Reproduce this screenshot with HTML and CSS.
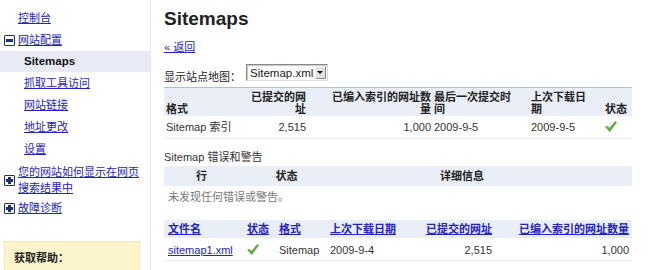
FILE: index.html
```html
<!DOCTYPE html>
<html lang="zh-CN">
<head>
    <meta charset="UTF-8">
    <title>Sitemaps</title>
    <link rel="stylesheet" href="styles.css">
</head>
<body>
    <div class="page">
        <!-- 左侧导航 -->
        <div class="sidebar">
            <ul class="nav">
                <li class="top"><a href="#">控制台</a></li>
                <li class="group"><span class="toggle minus"></span><a href="#">网站配置</a></li>
                <li class="sub active">Sitemaps</li>
                <li class="sub"><a href="#">抓取工具访问</a></li>
                <li class="sub"><a href="#">网站链接</a></li>
                <li class="sub"><a href="#">地址更改</a></li>
                <li class="sub"><a href="#">设置</a></li>
                <li class="group tall"><span class="toggle plus"></span><a href="#">您的网站如何显示在网页搜索结果中</a></li>
                <li class="group tall"><span class="toggle plus"></span><a href="#">故障诊断</a></li>
            </ul>
            <div class="help">获取帮助：</div>
        </div>

        <!-- 主内容 -->
        <div class="main">
            <h1>Sitemaps</h1>
            <div class="back"><a href="#">« 返回</a></div>

            <div class="picker">
                <span class="picker-label">显示站点地图：</span>
                <span class="select"><span class="select-text">Sitemap.xml</span><span class="select-btn"></span></span>
            </div>

            <table class="grid summary">
                <colgroup>
                    <col style="width:82px"><col style="width:64px"><col style="width:124px">
                    <col style="width:95px"><col style="width:74px"><col>
                </colgroup>
                <thead>
                    <tr>
                        <th class="c1">格式</th>
                        <th class="c2">已提交的网址</th>
                        <th class="c3">已编入索引的网址数量</th>
                        <th class="c4">最后一次提交时间</th>
                        <th class="c5">上次下载日期</th>
                        <th class="c6">状态</th>
                    </tr>
                </thead>
                <tbody>
                    <tr>
                        <td class="c1">Sitemap 索引</td>
                        <td class="c2">2,515</td>
                        <td class="c3">1,000</td>
                        <td class="c4">2009-9-5</td>
                        <td class="c5">2009-9-5</td>
                        <td class="c6"><span class="check"></span></td>
                    </tr>
                </tbody>
            </table>

            <div class="caption">Sitemap 错误和警告</div>

            <table class="grid errors">
                <colgroup>
                    <col style="width:75px"><col style="width:95px"><col>
                </colgroup>
                <thead>
                    <tr><th>行</th><th>状态</th><th class="detail">详细信息</th></tr>
                </thead>
                <tbody>
                    <tr><td colspan="3" class="empty">未发现任何错误或警告。</td></tr>
                </tbody>
            </table>

            <table class="grid files">
                <colgroup>
                    <col style="width:79px"><col style="width:32px"><col style="width:51px">
                    <col style="width:79px"><col style="width:91px"><col>
                </colgroup>
                <thead>
                    <tr>
                        <th><a href="#">文件名</a></th>
                        <th><a href="#">状态</a></th>
                        <th><a href="#">格式</a></th>
                        <th><a href="#">上次下载日期</a></th>
                        <th class="num"><a href="#">已提交的网址</a></th>
                        <th class="num last"><a href="#">已编入索引的网址数量</a></th>
                    </tr>
                </thead>
                <tbody>
                    <tr>
                        <td><a href="#">sitemap1.xml</a></td>
                        <td><span class="check"></span></td>
                        <td>Sitemap</td>
                        <td>2009-9-4</td>
                        <td class="num">2,515</td>
                        <td class="num last">1,000</td>
                    </tr>
                </tbody>
            </table>
        </div>
    </div>
</body>
</html>
```

FILE: styles.css
```css
body {
    margin: 0;
    font-family: "Liberation Sans", "Noto Sans CJK SC", sans-serif;
    font-size: 11px;
    color: #222;
    background: #fff;
}

a {
    color: #2323c8;
}

.page {
    display: flex;
    height: 270px;
    overflow: hidden;
}

/* 侧边栏 */
.sidebar {
    width: 150px;
    flex-shrink: 0;
    border-right: 1px solid #e6eaf3;
}

.nav {
    list-style: none;
    margin: 0;
    padding: 7px 0 0;
}

.nav li {
    height: 22px;
    line-height: 22px;
}

.nav .top {
    padding-left: 18px;
}

.nav .group {
    display: flex;
    align-items: center;
    padding-left: 4px;
    padding-right: 10px;
}

.nav .group.tall {
    height: auto;
    line-height: 16px;
    padding-top: 4px;
    padding-bottom: 0;
}

.nav .sub {
    padding-left: 24px;
}

.nav .active {
    background: #e8ebf5;
    font-weight: bold;
    color: #111;
    height: 21px;
    line-height: 21px;
    font-size: 11.5px;
}

.toggle {
    width: 9px;
    height: 9px;
    border: 1px solid #1d2f7a;
    border-radius: 1px;
    margin-right: 3px;
    flex-shrink: 0;
    position: relative;
    background: #fff;
}

.toggle::before {
    content: '';
    position: absolute;
    left: 1px;
    right: 1px;
    top: 3px;
    height: 3px;
    background: #1d2f7a;
}

.toggle.plus::after {
    content: '';
    position: absolute;
    top: 1px;
    bottom: 1px;
    left: 3px;
    width: 3px;
    background: #1d2f7a;
}

.help {
    margin: 25px 10px 0 4px;
    height: 40px;
    background: #fcf5cc;
    border: 1px solid #f2e7ad;
    border-bottom: none;
    padding: 9px 0 0 9px;
    font-weight: bold;
    line-height: 14px;
    box-sizing: border-box;
}

/* 主内容 */
.main {
    flex: 1;
    padding-left: 13px;
    padding-right: 17px;
}

h1 {
    font-size: 19px;
    line-height: 22px;
    margin: 8px 0 0;
}

.back {
    margin-top: 10px;
    line-height: 14px;
}

.picker {
    display: flex;
    align-items: center;
    margin-top: 9px;
    height: 19px;
}

.picker-label {
    width: 82px;
    position: relative;
    top: 3px;
}

.select {
    display: flex;
    align-items: center;
    width: 82px;
    height: 17px;
    box-sizing: border-box;
    border: 1px solid #8a8a8a;
    border-right-color: #ddd;
    border-bottom-color: #ddd;
    box-shadow: inset 1px 1px 0 #c8c8c8;
    font-size: 11.5px;
    padding-left: 3px;
}

.select-text {
    flex: 1;
}

.select-btn {
    width: 11px;
    height: 13px;
    margin-right: 1px;
    background: #e4e1d8;
    border: 1px solid #fff;
    border-right-color: #8a8a8a;
    border-bottom-color: #8a8a8a;
    box-sizing: border-box;
    position: relative;
}

.select-btn::after {
    content: '';
    position: absolute;
    left: 1px;
    top: 4px;
    border-left: 3px solid transparent;
    border-right: 3px solid transparent;
    border-top: 3px solid #111;
}

/* 表格 */
.grid {
    width: 468px;
    border-collapse: collapse;
    table-layout: fixed;
}

.grid th {
    background: #eaeef7;
    font-weight: bold;
    text-align: left;
    vertical-align: bottom;
}

.grid td {
    color: #333;
}

.summary {
    margin-top: 5px;
    border-top: 1px solid #a9c0e6;
}

.summary th {
    line-height: 12px;
    padding: 3px 0 1px;
}

.summary td {
    line-height: 14px;
    padding: 4px 0;
    border-bottom: 1px solid #eceff5;
}

.summary .c1 { padding-left: 2px; }
.summary .c2 { text-align: right; padding-right: 4px; }
.summary .c3 { text-align: right; padding-left: 18px; padding-right: 3px; }
.summary .c4 { padding-left: 0; padding-right: 12px; }
.summary .c5 { padding-left: 2px; padding-right: 12px; }
.summary .c6 { padding-left: 2px; }

.caption {
    margin-top: 11px;
    line-height: 14px;
    color: #333;
}

.errors {
    margin-top: 2px;
}

.errors th {
    text-align: center;
    line-height: 14px;
    padding: 3px 0;
}

.errors th.detail {
    padding-right: 42px;
}

.errors td.empty {
    padding: 4px 4px;
    line-height: 14px;
    color: #777;
}

.files {
    margin-top: 12px;
}

.files th {
    line-height: 14px;
    padding: 2px 0 2px 4px;
}

.files td {
    line-height: 14px;
    padding: 5px 0 3px 4px;
    border-bottom: 1px solid #eceff5;
}

.files .num {
    text-align: right;
    padding-right: 4px;
}

.files .num.last {
    padding-right: 3px;
}

.check {
    display: inline-block;
    width: 12px;
    height: 11px;
    vertical-align: -1px;
    background: linear-gradient(135deg, #9ed36a, #2f8a1f);
    clip-path: polygon(0 55%, 18% 40%, 38% 62%, 85% 0, 100% 12%, 40% 100%);
}
```
